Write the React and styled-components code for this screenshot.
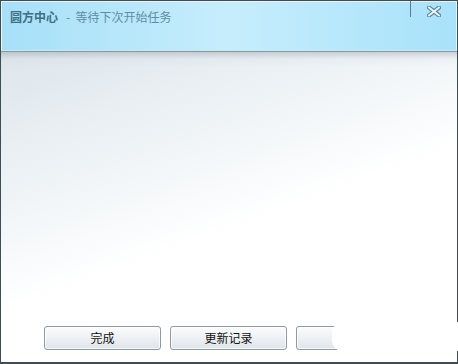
import React from 'react'
import styled, { createGlobalStyle } from 'styled-components'

const Global = createGlobalStyle`
  html, body {
    margin: 0;
    padding: 0;
    background: #ffffff;
  }
  body {
    font-family: "Noto Sans CJK SC", "Liberation Sans", sans-serif;
  }
`;

const App = () => {
  return (
    <>
      <Global />
      <Window>
        <TitleBar>
          <Title>
            <strong>圆方中心</strong>
            <span>-&nbsp; 等待下次开始任务</span>
          </Title>
          <Divider />
          <Close aria-label="close">
            <svg width="14" height="11" viewBox="0 0 14 11">
              <path d="M2 1.5 L12 9.5 M12 1.5 L2 9.5" stroke="#5f8494" strokeWidth="4.2" strokeLinecap="square" />
              <path d="M2 1.5 L12 9.5 M12 1.5 L2 9.5" stroke="#e9f7fc" strokeWidth="1.8" strokeLinecap="square" />
            </svg>
          </Close>
        </TitleBar>
        <Body>
          <Content />
          <Footer>
            <Button>完成</Button>
            <Button>更新记录</Button>
            <Button></Button>
            <Mask />
          </Footer>
        </Body>
      </Window>
    </>
  )
}

const Window = styled.div`
  width: 458px;
  height: 364px;
  box-sizing: border-box;
  border: 1px solid #3f4d55;
  border-bottom-width: 2px;
  display: flex;
  flex-direction: column;
  position: relative;
`;

const TitleBar = styled.div`
  height: 50px;
  flex-shrink: 0;
  box-sizing: border-box;
  display: flex;
  align-items: flex-start;
  position: relative;
  border: 1px solid #e4f6fc;
  border-bottom: 1px solid #cfe6ec;
  background: linear-gradient(90deg, #a6e0f8 0%, #c6edfc 50%, #a8e2fa 100%);
  box-shadow: 0 1px 0 #8b979c;
`;

const Title = styled.div`
  flex: 1;
  padding: 6px 0 0 8px;
  font-size: 12px;
  line-height: 18px;
  color: #5f8ea4;
  strong {
    color: #3f6f86;
    font-weight: bold;
    margin-right: 8px;
  }
`;

const Divider = styled.div`
  width: 1px;
  height: 16px;
  background: #5d7d8a;
  margin-right: 13px;
  margin-top: -1px;
`;

const Close = styled.div`
  width: 20px;
  padding-top: 4px;
  margin-right: 12px;
  display: flex;
  justify-content: center;
`;

const Body = styled.div`
  flex: 1;
  display: flex;
  flex-direction: column;
  background:
    linear-gradient(180deg, rgba(120, 130, 140, 0.35) 0px, rgba(200, 210, 215, 0.15) 8px, rgba(255,255,255,0) 16px),
    linear-gradient(160deg, #dde5eb 0%, #eef3f6 30%, #ffffff 55%, #ffffff 100%);
`;

const Content = styled.div`
  flex: 1;
`;

const Footer = styled.div`
  height: 36px;
  display: flex;
  gap: 9px;
  padding: 0 0 0 43px;
  position: relative;
`;

const Button = styled.div`
  width: 117px;
  height: 24px;
  box-sizing: border-box;
  border: 1px solid #8d9aa3;
  border-radius: 3px;
  background: linear-gradient(180deg, #fbfcfd 0%, #eef1f4 50%, #dee4e9 100%);
  box-shadow: inset 0 0 0 1px rgba(255, 255, 255, 0.8);
  font-size: 12px;
  line-height: 22px;
  text-align: center;
  color: #111;
`;

const Mask = styled.div`
  position: absolute;
  left: 331px;
  right: -1px;
  top: -4px;
  height: 29px;
  background: #ffffff;
  border-radius: 10px 0 0 10px;
`;

export default App
